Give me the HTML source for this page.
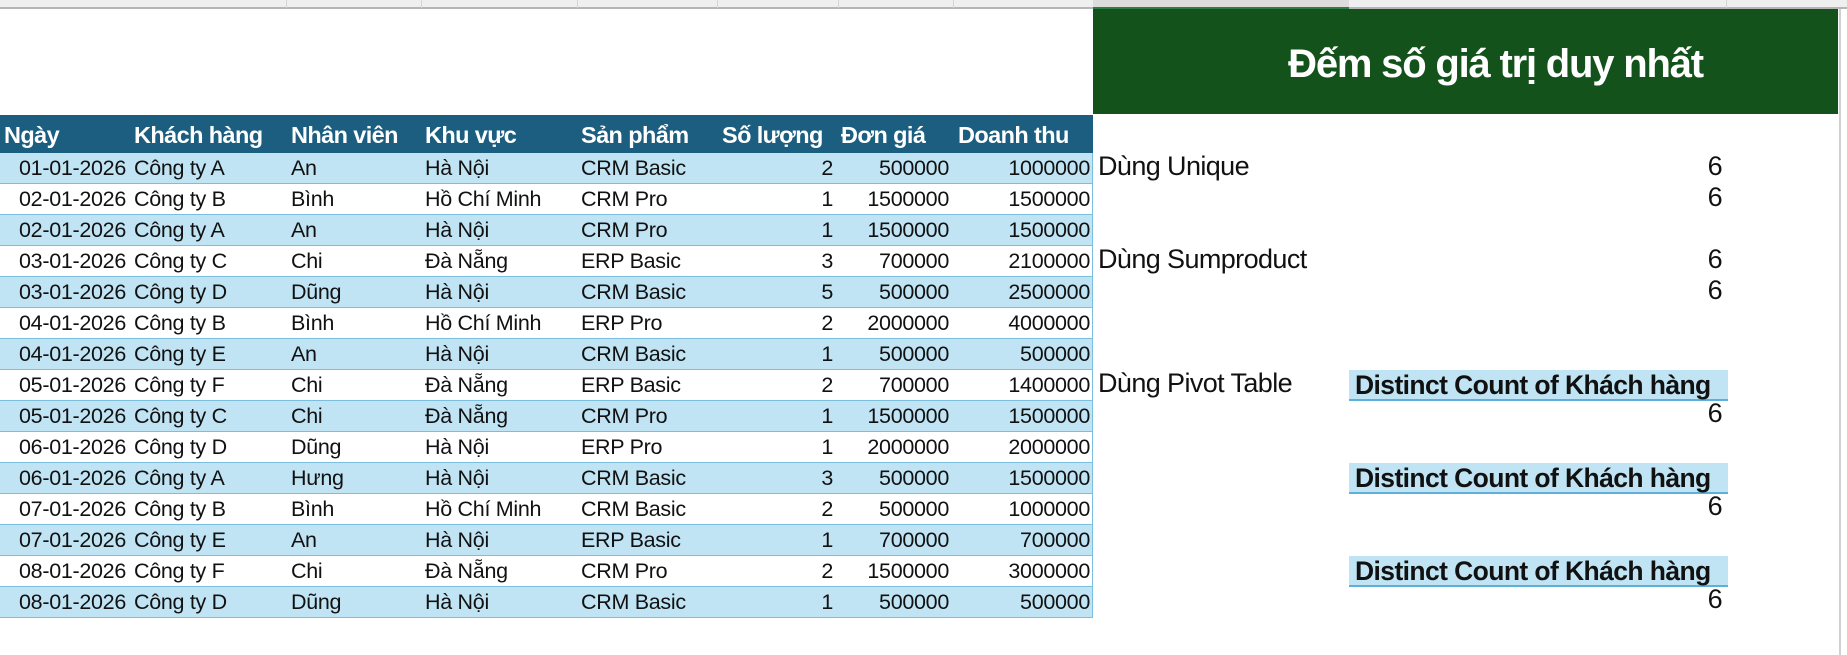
<!DOCTYPE html><html><head><meta charset="utf-8"><style>
*{margin:0;padding:0;box-sizing:border-box}
body{width:1847px;height:655px;background:#fff;position:relative;overflow:hidden;font-family:"Liberation Sans Narrow","Liberation Sans",sans-serif}
.a{position:absolute;white-space:nowrap}
.strip{left:0;top:0;width:1847px;height:9px;background:#efefef;border-bottom:2px solid #b5b5b5}
.sep{top:0;width:1px;height:8px;background:#d4d4d4}
.hdr{left:0;top:115px;width:1093px;height:38px;background:#1b5e80}
.hdr div{position:absolute;top:0;line-height:40px;color:#fff;font-weight:bold;font-size:23.5px;letter-spacing:-0.6px}
.row{left:0;width:1093px;height:31px;border-bottom:1px solid #7bbfe0;border-right:1px solid #7bbfe0}
.row.c{background:#c0e4f4}
.row div{position:absolute;top:0;line-height:31px;font-size:21.5px;color:#111;letter-spacing:-0.3px}
.r{text-align:right}
.lbl{font-size:27px;color:#111;letter-spacing:-0.6px;line-height:31px}
.dc{left:1349px;width:379px;height:31px;background:#c0e4f4;border-bottom:2px solid #5db0da;font-weight:bold;font-size:26.5px;line-height:31px;padding-left:6px;color:#111;letter-spacing:-0.6px}
</style></head><body>
<div class="a strip"></div>
<div class="a" style="left:1093px;top:0;width:256px;height:9px;background:#dcdcdc;border-bottom:2px solid #2e7d45"></div>
<div class="a sep" style="left:286px"></div><div class="a sep" style="left:421px"></div><div class="a sep" style="left:577px"></div><div class="a sep" style="left:717px"></div><div class="a sep" style="left:838px"></div><div class="a sep" style="left:953px"></div><div class="a sep" style="left:1726px"></div>
<div class="a" style="left:1093px;top:9px;width:745px;height:105px;background:#14521b"></div>
<div class="a" style="left:1093px;top:9px;width:745px;height:105px;line-height:110px;text-align:center;color:#fff;font-weight:bold;font-size:40px;padding-left:60px;letter-spacing:-1.2px">Đếm số giá trị duy nhất</div>
<div class="a" style="left:1839px;top:9px;width:2px;height:646px;background:#d0d0d0"></div>
<div class="a hdr">
<div style="left:4px">Ngày</div><div style="left:134px">Khách hàng</div><div style="left:291px">Nhân viên</div><div style="left:425px">Khu vực</div><div style="left:581px">Sản phẩm</div><div style="left:722px">Số lượng</div><div style="left:841px">Đơn giá</div><div style="left:958px">Doanh thu</div>
</div>
<div id="rows"></div>
<script>
var d=[["01-01-2026","Công ty A","An","Hà Nội","CRM Basic",2,500000,1000000],["02-01-2026","Công ty B","Bình","Hồ Chí Minh","CRM Pro",1,1500000,1500000],["02-01-2026","Công ty A","An","Hà Nội","CRM Pro",1,1500000,1500000],["03-01-2026","Công ty C","Chi","Đà Nẵng","ERP Basic",3,700000,2100000],["03-01-2026","Công ty D","Dũng","Hà Nội","CRM Basic",5,500000,2500000],["04-01-2026","Công ty B","Bình","Hồ Chí Minh","ERP Pro",2,2000000,4000000],["04-01-2026","Công ty E","An","Hà Nội","CRM Basic",1,500000,500000],["05-01-2026","Công ty F","Chi","Đà Nẵng","ERP Basic",2,700000,1400000],["05-01-2026","Công ty C","Chi","Đà Nẵng","CRM Pro",1,1500000,1500000],["06-01-2026","Công ty D","Dũng","Hà Nội","ERP Pro",1,2000000,2000000],["06-01-2026","Công ty A","Hưng","Hà Nội","CRM Basic",3,500000,1500000],["07-01-2026","Công ty B","Bình","Hồ Chí Minh","CRM Basic",2,500000,1000000],["07-01-2026","Công ty E","An","Hà Nội","ERP Basic",1,700000,700000],["08-01-2026","Công ty F","Chi","Đà Nẵng","CRM Pro",2,1500000,3000000],["08-01-2026","Công ty D","Dũng","Hà Nội","CRM Basic",1,500000,500000]];
var h="";d.forEach(function(r,i){h+='<div class="a row'+(i%2==0?' c':'')+'" style="top:'+(153+31*i)+'px">'+
'<div class="r" style="right:966px">'+r[0]+'</div><div style="left:134px">'+r[1]+'</div><div style="left:291px">'+r[2]+'</div><div style="left:425px">'+r[3]+'</div><div style="left:581px">'+r[4]+'</div><div class="r" style="right:259px">'+r[5]+'</div><div class="r" style="right:143px">'+r[6]+'</div><div class="r" style="right:2px">'+r[7]+'</div></div>';});
document.getElementById("rows").innerHTML=h;
</script>
<div class="a lbl" style="left:1098px;top:151px">Dùng Unique</div>
<div class="a lbl" style="left:1098px;top:244px">Dùng Sumproduct</div>
<div class="a lbl" style="left:1098px;top:368px">Dùng Pivot Table</div>
<div class="a lbl" style="left:1700px;top:151px;width:22px;text-align:right">6</div>
<div class="a lbl" style="left:1700px;top:182px;width:22px;text-align:right">6</div>
<div class="a lbl" style="left:1700px;top:244px;width:22px;text-align:right">6</div>
<div class="a lbl" style="left:1700px;top:275px;width:22px;text-align:right">6</div>
<div class="a dc" style="top:370px">Distinct Count of Khách hàng</div>
<div class="a lbl" style="left:1700px;top:398px;width:22px;text-align:right">6</div>
<div class="a dc" style="top:463px">Distinct Count of Khách hàng</div>
<div class="a lbl" style="left:1700px;top:491px;width:22px;text-align:right">6</div>
<div class="a dc" style="top:556px">Distinct Count of Khách hàng</div>
<div class="a lbl" style="left:1700px;top:584px;width:22px;text-align:right">6</div>
</body></html>
